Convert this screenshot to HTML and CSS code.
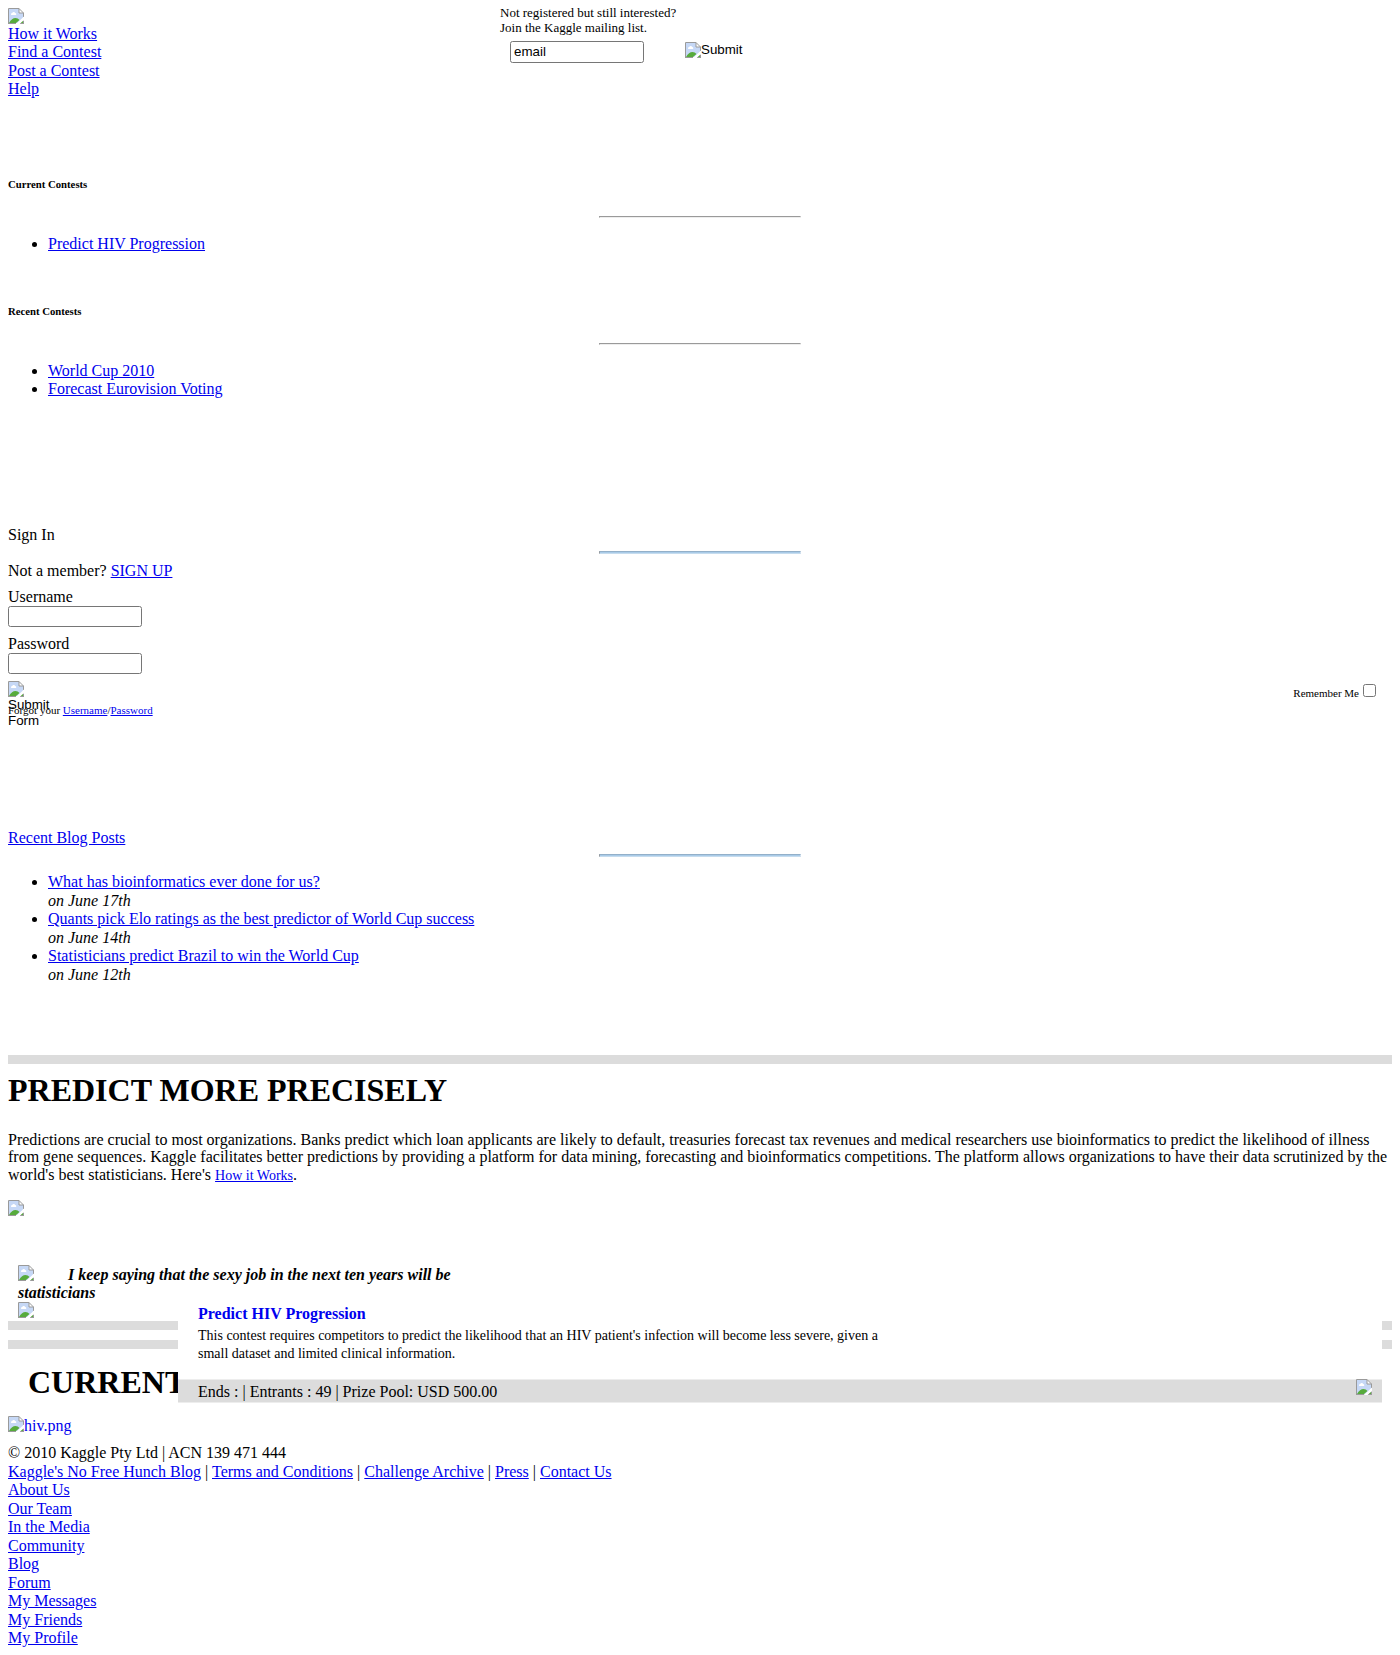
FILE: index.html
```
<!DOCTYPE html>
<html lang="en">
<head>
<meta charset="utf-8">
<title>Kaggle</title>
<link rel="stylesheet" href="styles.css">
</head>
<body>
<svg class="defs" width="0" height="0" aria-hidden="true">
  <symbol id="broken" viewBox="0 0 16 16">
    <path d="M1 1H11L15 5V15H1Z" fill="#c6d8f6"/>
    <path d="M3 6.5a1.3 1.3 0 0 1 1.2-1.6 1.6 1.6 0 0 1 3 .1A1.2 1.2 0 0 1 8 7H3.300Z" fill="#fff"/>
    <path d="M1 15C3 11.500 5 10 7.500 10c1.500 0 3 .7 4 2L8 15Z" fill="#57ab3c"/>
    <path d="M12 15l3-2.500V15Z" fill="#57ab3c"/>
    <path d="M11 .5V5h4.500Z" fill="#fff"/>
    <path d="M.5 16V.5H11L15.500 5v4M0 15.500h8M12 15.500h4M15.500 12.500V16M11 .5V5h4.500" fill="none" stroke="#9a9a9a"/>
    <path d="M8 16l8-7.500V12l-4.500 4Z" fill="#fff"/>
  </symbol>
</svg>

<header class="top">
  <div class="brand">
    <svg class="img"><use href="#broken"/></svg>
    <nav class="links">
      <a href="#">How it Works</a>
      <a href="#">Find a Contest</a>
      <a href="#">Post a Contest</a>
      <a href="#">Help</a>
    </nav>
  </div>
  <form class="mailing">
    <p>Not registered but still interested?<br>Join the Kaggle mailing list.</p>
    <div class="mailing-row">
      <input class="field" type="text" value="email">
      <span class="submit"><svg class="img"><use href="#broken"/></svg><span>Submit</span></span>
    </div>
  </form>
</header>

<section class="contests">
  <h5>Current Contests</h5>
  <hr>
  <ul><li><a href="#">Predict HIV Progression</a></li></ul>
</section>
<section class="contests recent">
  <h5>Recent Contests</h5>
  <hr>
  <ul>
    <li><a href="#">World Cup 2010</a></li>
    <li><a href="#">Forecast Eurovision Voting</a></li>
  </ul>
</section>

<section class="signin">
  <div>Sign In</div>
  <hr class="blue">
  <div class="member">Not a member? <a href="#">SIGN UP</a></div>
  <form>
    <label class="entry">Username<input class="field" type="text"></label>
    <label class="entry">Password<input class="field" type="password"></label>
    <div class="actions">
      <div class="submit-form"><svg class="img"><use href="#broken"/></svg><span>Submit Form</span></div>
      <label class="remember"><span>Remember Me</span><input type="checkbox"></label>
    </div>
    <div class="forgot">Forgot your <a href="#">Username</a>/<a href="#">Password</a></div>
  </form>
</section>

<section class="blog">
  <div><a href="#">Recent Blog Posts</a></div>
  <hr class="blue">
  <ul>
    <li><a href="#">What has bioinformatics ever done for us?</a><br><em>on June 17th</em></li>
    <li><a href="#">Quants pick Elo ratings as the best predictor of World Cup success</a><br><em>on June 14th</em></li>
    <li><a href="#">Statisticians predict Brazil to win the World Cup</a><br><em>on June 12th</em></li>
  </ul>
</section>

<main>
  <div class="bar"></div>
  <h1>PREDICT MORE PRECISELY</h1>
  <p class="intro">Predictions are crucial to most organizations. Banks predict which loan applicants are likely to default, treasuries forecast tax revenues and medical researchers use bioinformatics to predict the likelihood of illness from gene sequences. Kaggle facilitates better predictions by providing a platform for data mining, forecasting and bioinformatics competitions. The platform allows organizations to have their data scrutinized by the world's best statisticians. Here's <a href="#">How it Works</a>.</p>
  <svg class="img"><use href="#broken"/></svg>
  <div class="quote">
    <p><svg class="img"><use href="#broken"/></svg>I keep saying that the sexy job in the next ten years will be statisticians</p>
    <svg class="img"><use href="#broken"/></svg>
  </div>
  <section class="current">
    <div class="bar"></div>
    <div class="bar second"></div>
    <h1>CURRENT</h1>
    <article class="card">
      <h4>Predict HIV Progression</h4>
      <p>This contest requires competitors to predict the likelihood that an HIV patient's infection will become less severe, given a small dataset and limited clinical information.</p>
      <div class="stats"><span>Ends : | Entrants : 49 | Prize Pool: USD 500.00</span><svg class="img"><use href="#broken"/></svg></div>
    </article>
    <a class="hiv" href="#"><svg class="img"><use href="#broken"/></svg><span>hiv.png</span></a>
  </section>
</main>

<footer>
  <div>© 2010 Kaggle Pty Ltd | ACN 139 471 444</div>
  <div><a href="#">Kaggle's No Free Hunch Blog</a> | <a href="#">Terms and Conditions</a> | <a href="#">Challenge Archive</a> | <a href="#">Press</a> | <a href="#">Contact Us</a></div>
  <nav class="links">
    <a href="#">About Us</a>
    <a href="#">Our Team</a>
    <a href="#">In the Media</a>
    <a href="#">Community</a>
    <a href="#">Blog</a>
    <a href="#">Forum</a>
    <a href="#">My Messages</a>
    <a href="#">My Friends</a>
    <a href="#">My Profile</a>
  </nav>
</footer>
</body>
</html>
```
FILE: styles.css
```
body {
  margin: 8px;
  background: #fff;
  color: #000;
  font: 16px/18.5px "Liberation Serif", "Times New Roman", serif;
}
a { color: #0000ee; }
p, h1, h4, h5, ul { margin: 0; }
ul { padding-left: 40px; }
.defs { position: absolute; }
.img { display: block; flex: none; width: 16px; height: 16px; }
.links { display: flex; flex-direction: column; align-items: flex-start; }

hr { width: 200px; box-sizing: content-box; margin: 0 auto; }
hr.blue { height: 1px; margin-top: 7px; background: #a9cbe8; border: 1px solid; border-color: #93b0c9 #d5e2ee #c6dcee #9a9a9a; }

.field {
  display: block;
  box-sizing: border-box;
  width: 134px;
  height: 21px;
  margin: 0;
  padding: 1px 3px;
  border: 1px solid #767676;
  border-radius: 2.5px;
  font: 13.333px "Liberation Sans", Arial, sans-serif;
}

.top { display: flex; height: 90.5px; }
.brand { width: 492px; }
.brand .links { margin-top: .5px; }
.mailing p { font-size: 13px; line-height: 15px; margin-top: -3px; }
.mailing-row { display: flex; align-items: flex-start; gap: 41px; margin: 6px 0 0 10px; }
.mailing-row .field { height: 22px; padding-bottom: 3px; }
.submit { display: flex; margin-top: 1px; font: 13.333px/15px "Liberation Sans", Arial, sans-serif; }

.contests { margin-top: 79.5px; }
.recent { margin-top: 52px; }
h5 { font-size: 10.72px; line-height: 12px; margin-bottom: 26px; }
.contests ul { margin-top: 16.5px; }

.signin { height: 176px; margin-top: 127px; }
.member { margin-top: 7.5px; }
.entry { display: block; height: 39.5px; margin-top: 7.5px; }
.entry .field { margin-top: 0; }
.actions { display: flex; justify-content: space-between; height: 23px; margin-top: 7.25px; }
.submit-form { width: 40px; font: 13.333px/16px "Liberation Sans", Arial, sans-serif; }
.submit-form span { display: block; margin-top: -.5px; }
.remember { display: flex; align-items: flex-start; gap: 4px; margin-right: 16px; padding-top: 3px; font-size: 11px; line-height: 17px; }
.remember span { margin-top: 1px; }
.remember input { width: 13px; height: 13px; margin: 0; }
.forgot { font-size: 11px; line-height: 12px; }

.blog { margin-top: 127px; }
.blog ul { margin-top: 16px; }

.bar { height: 9px; background: #dcdcdc; }
main > .bar { margin-top: 71px; }
h1 { font-size: 32px; line-height: 36px; }
main > h1 { margin-top: 8px; }
.intro { height: 52.8px; margin: 22.7px 0 16.5px; line-height: 17.6px; }
.intro a { font-size: 14px; }

.quote { width: 450px; height: 56px; margin: 49px 0 0 10px; }
.quote p { padding-top: .8px; font-weight: bold; font-style: italic; line-height: 18.5px; }
.quote p .img { float: left; margin: -.8px 34px 0 0; }
.quote > .img { margin-top: -.8px; }

.current { position: relative; }
.second { margin-top: 10px; }
.current h1 { margin: 15px 0 0 20px; }
.card { position: absolute; top: -21px; left: 170px; right: 10px; height: 103px; background: #fff; }
.card h4 { margin: 5px 0 0 20px; font-size: 16px; color: #0000ee; }
.card p { width: 690px; margin: 4px 0 0 20px; font-size: 14px; line-height: 18px; }
.stats { display: flex; justify-content: space-between; height: 22px; margin-top: 15.5px; padding: 0 10px 0 20px; border: solid #ededed; border-width: 1px 0; background: #dcdcdc; line-height: 23px; }
.stats .img { margin-top: -1px; }
.hiv { display: flex; width: fit-content; height: 16px; margin-top: 16px; text-decoration: none; }
.hiv span { margin-top: 1px; }

footer { margin-top: 12.3px; }
```
